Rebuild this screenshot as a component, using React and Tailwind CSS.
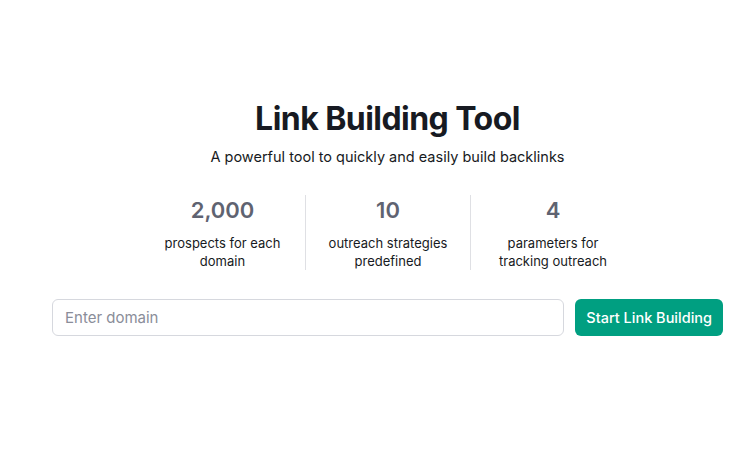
export default function App() {
  const stats = [
    { value: "2,000", label: "prospects for each domain" },
    { value: "10", label: "outreach strategies predefined" },
    { value: "4", label: "parameters for tracking outreach" },
  ];

  return (
    <div className="w-[750px] h-[450px] bg-white font-['Inter',sans-serif] text-[#171a22]">
      <div className="ml-[52px] w-[671px] pt-[99px] flex flex-col items-center">
        <h1 className="text-[32px] leading-[40px] font-bold tracking-[-0.017em]">Link Building Tool</h1>
        <p className="mt-[7px] text-[14.5px] leading-[22px]">
          A powerful tool to quickly and easily build backlinks
        </p>

        <div className="mt-[27px] flex">
          {stats.map((s, i) => (
            <div
              key={s.value}
              className={
                "w-[165px] px-5 flex flex-col items-center text-center " +
                (i > 0 ? "border-l border-[#dfe0e4]" : "")
              }
            >
              <div className="text-[22px] leading-[30px] font-semibold text-[#5f6371]">{s.value}</div>
              <div className="mt-[9px] text-[13px] leading-[18px] text-[#171a22]">{s.label}</div>
            </div>
          ))}
        </div>

        <div className="mt-[29px] w-full flex gap-[11px]">
          <input
            type="text"
            placeholder="Enter domain"
            className="flex-1 h-[37px] px-3 rounded-md border border-[#d6d8de] text-[15px] placeholder-[#8a8d99] outline-none"
          />
          <button className="h-[37px] px-[11px] rounded-md bg-[#009f81] text-white text-[14.5px] font-medium">
            Start Link Building
          </button>
        </div>
      </div>
    </div>
  );
}
